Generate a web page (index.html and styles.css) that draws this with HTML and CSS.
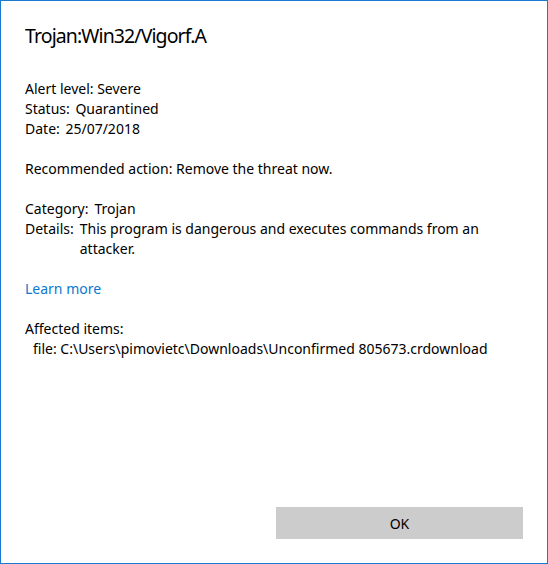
FILE: index.html
```html
<!DOCTYPE html>
<html>
<head>
<meta charset="utf-8">
<link rel="stylesheet" href="styles.css">
</head>
<body>
<div class="window">
  <div class="content">
    <h1 class="title">Trojan:Win32/Vigorf.A</h1>
    <div class="group">
      <div class="row">Alert level: Severe</div>
      <div class="row"><span class="label">Status:</span> <span>Quarantined</span></div>
      <div class="row"><span class="label">Date:</span> <span>25/07/2018</span></div>
    </div>
    <div class="group">
      <div class="row">Recommended action: Remove the threat now.</div>
    </div>
    <div class="group">
      <div class="pair"><span class="label">Category:</span><span class="value">Trojan</span></div>
      <div class="pair"><span class="label">Details:</span><span class="value details">This program is dangerous and executes commands from an attacker.</span></div>
    </div>
    <div class="group">
      <a class="link" href="#">Learn more</a>
    </div>
    <div class="group">
      <div class="row">Affected items:</div>
      <div class="row indent">file: C:\Users\pimovietc\Downloads\Unconfirmed 805673.crdownload</div>
    </div>
  </div>
  <div class="footer">
    <button class="ok">OK</button>
  </div>
</div>
</body>
</html>
```
FILE: styles.css
```css
html, body {
  margin: 0;
  padding: 0;
  background: #ffffff;
}
.window {
  box-sizing: border-box;
  width: 548px;
  height: 564px;
  border: 1px solid #1a7ad0;
  background: #ffffff;
  display: flex;
  flex-direction: column;
  font-family: "Noto Sans", "Segoe UI", sans-serif;
  font-size: 14px;
  color: #000000;
}
.content {
  flex: 1;
  padding: 21px 24px 0 24px;
}
.title {
  margin: 0 0 29px 0;
  font-size: 19.5px;
  letter-spacing: -0.9px;
  font-weight: normal;
  line-height: 28px;
}
.group {
  margin-bottom: 20px;
}
.row {
  line-height: 20px;
}
.row .label {
  margin-right: 2px;
}
.pair {
  display: flex;
  line-height: 20px;
}
.pair .label {
  margin-right: 6px;
  flex: none;
}
.details {
  width: 420px;
}
.indent {
  padding-left: 8px;
}
.link {
  color: #0b78d0;
  text-decoration: none;
  line-height: 20px;
  display: inline-block;
}
.footer {
  display: flex;
  justify-content: flex-end;
  padding: 0 24px 24px 0;
}
.ok {
  width: 247px;
  height: 32px;
  background: #cccccc;
  border: none;
  font-family: "Noto Sans", "Segoe UI", sans-serif;
  font-size: 14px;
  color: #000000;
  padding: 0;
}
```
